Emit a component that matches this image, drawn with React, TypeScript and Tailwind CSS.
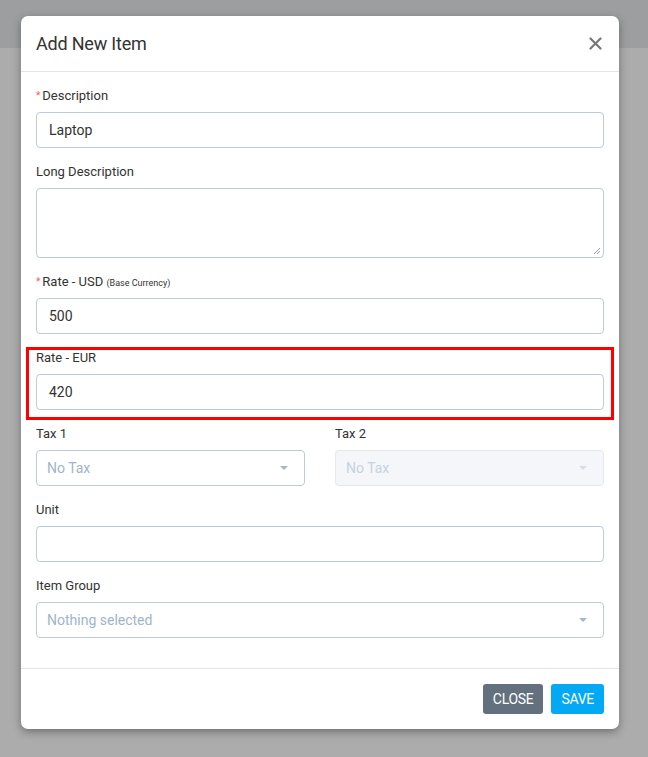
import React from 'react';

const Label = ({ children, required }: { children: React.ReactNode; required?: boolean }) => (
  <label className="block text-[13px] leading-[17px] h-[17px] text-[#333] mb-[8px]">
    {required && <span className="text-[#fc5a6a] text-[10px] mr-[2px] align-top">*</span>}
    {children}
  </label>
);

const TextInput = ({ value }: { value?: string }) => (
  <div className="h-[36px] rounded-[4px] border border-[#bfcbd9] px-[12px] flex items-center text-[14px] text-[#333]">
    {value}
  </div>
);

const Select = ({ text, disabled }: { text: string; disabled?: boolean }) => (
  <div
    className={`h-[36px] rounded-[4px] border px-[10px] flex items-center justify-between text-[14px] ${
      disabled ? 'bg-[#f4f6f9] border-[#e4e9ef] text-[#c7d2e0]' : 'bg-white border-[#bfcbd9] text-[#a1b4cc]'
    }`}
  >
    <span>{text}</span>
    <span
      className={`mr-[6px] w-0 h-0 border-l-[4px] border-r-[4px] border-t-[4px] border-l-transparent border-r-transparent ${
        disabled ? 'border-t-[#d5dde7]' : 'border-t-[#a9b6c6]'
      }`}
    />
  </div>
);

export default function App() {
  return (
    <div className="min-h-[757px] w-full bg-[#acacac] relative font-['Roboto',sans-serif]">
      <div className="h-[48px] bg-[#9d9ea0]" />
      <div className="absolute left-[21px] top-[16px] w-[598px] bg-white rounded-[7px] shadow-[0_3px_9px_rgba(0,0,0,0.35)]">
        {/* Header */}
        <div className="h-[56px] border-b border-[#e5e5e5] flex items-center justify-between px-[15px]">
          <h4 className="text-[18px] text-[#333] tracking-[-0.2px]">Add New Item</h4>
          <svg width="13" height="13" viewBox="0 0 13 13" className="mr-[2px]">
            <path d="M1.5 1.5 L11.5 11.5 M11.5 1.5 L1.5 11.5" stroke="#777" strokeWidth="2.2" strokeLinecap="round" />
          </svg>
        </div>

        {/* Body */}
        <div className="px-[15px] pt-[15px] pb-[15px]">
          <div className="mb-[15px]">
            <Label required>Description</Label>
            <TextInput value="Laptop" />
          </div>
          <div className="mb-[15px]">
            <Label>Long Description</Label>
            <div className="h-[70px] rounded-[4px] border border-[#bfcbd9] relative">
              <svg width="8" height="8" viewBox="0 0 8 8" className="absolute right-[2px] bottom-[2px]">
                <path d="M7 1 L1 7 M7 4 L4 7" stroke="#999" strokeWidth="1" />
              </svg>
            </div>
          </div>
          <div className="mb-[15px]">
            <Label required>
              Rate - USD <small className="text-[9px] leading-none">(Base Currency)</small>
            </Label>
            <TextInput value="500" />
          </div>
          <div className="mb-[15px] relative">
            <div className="absolute -left-[10px] -right-[10px] -top-[2px] -bottom-[10px] border-[3px] border-[#ff0000] pointer-events-none" />
            <Label>Rate - EUR</Label>
            <TextInput value="420" />
          </div>
          <div className="mb-[15px] grid grid-cols-2 gap-[30px]">
            <div>
              <Label>Tax 1</Label>
              <Select text="No Tax" />
            </div>
            <div>
              <Label>Tax 2</Label>
              <Select text="No Tax" disabled />
            </div>
          </div>
          <div className="mb-[15px]">
            <Label>Unit</Label>
            <TextInput />
          </div>
          <div className="mb-[15px]">
            <Label>Item Group</Label>
            <Select text="Nothing selected" />
          </div>
        </div>

        {/* Footer */}
        <div className="border-t border-[#e5e5e5] px-[15px] py-[15px] flex justify-end gap-[8px]">
          <button className="h-[30px] px-[10px] rounded-[3px] bg-[#63707e] text-white text-[14px] uppercase tracking-[-0.3px]">Close</button>
          <button className="h-[30px] px-[10px] rounded-[3px] bg-[#03a9f4] text-white text-[14px] uppercase tracking-[-0.3px]">Save</button>
        </div>
      </div>
    </div>
  );
}
